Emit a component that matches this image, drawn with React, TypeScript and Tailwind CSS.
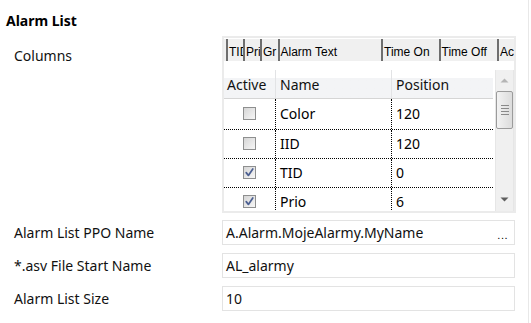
import React from 'react';

type Row = { name: string; position: string; active: boolean; h: string };

const stripCols = [
  { label: 'TID', w: 'w-[17px]' },
  { label: 'Pri', w: 'w-[17px]' },
  { label: 'Gr', w: 'w-[17.5px]' },
  { label: 'Alarm Text', w: 'w-[103.5px]' },
  { label: 'Time On', w: 'w-[57.5px]' },
  { label: 'Time Off', w: 'w-[58.5px]' },
  { label: 'Ac', w: 'w-[17px]' },
];

const rows: Row[] = [
  { name: 'Color', position: '120', active: false, h: 'h-[31px]' },
  { name: 'IID', position: '120', active: false, h: 'h-[29px]' },
  { name: 'TID', position: '0', active: true, h: 'h-[29px]' },
  { name: 'Prio', position: '6', active: true, h: 'h-[29px]' },
];

const CheckBox: React.FC<{ checked: boolean }> = ({ checked }) => (
  <div className="w-[13px] h-[13px] border border-[#8e8f8f] bg-linear-to-br from-[#d6d6d6] to-[#f7f7f7] flex items-center justify-center -mt-[1px]">
    {checked && (
      <svg width="11" height="11" viewBox="0 0 11 11">
        <path d="M2.2 5.6 L4.4 8.4 L8.8 2" stroke="#4b5f91" strokeWidth="1.7" fill="none" strokeLinecap="round" strokeLinejoin="round" />
      </svg>
    )}
  </div>
);

const Field: React.FC<{ label: string; value: string; dots?: boolean; mt: string }> = ({ label, value, dots, mt }) => (
  <div className={`flex items-center ${mt}`}>
    <div className="w-[222px] pl-[14px] text-[#111]">{label}</div>
    <div className="w-[293px] h-[25px] border border-[#e3e3e3] flex items-center justify-between pl-[3px] pr-[6px]">
      <span className="text-[#111]">{value}</span>
      {dots && <span className="text-[11px] font-['Liberation_Sans'] pt-[5px] tracking-[0.5px]">...</span>}
    </div>
  </div>
);

const App: React.FC = () => {
  return (
    <div className="w-[531px] h-[323px] bg-white overflow-hidden font-['Noto_Sans',sans-serif] text-[14px] leading-[20px] text-black">
      <div className="w-[529px] h-full border-r border-[#e8e8e8]">
        {/* Title */}
        <div className="pt-[11px] pl-[6px] h-[36px] font-bold">Alarm List</div>

        {/* Columns editor */}
        <div className="flex">
          <div className="w-[222px] pl-[14px] pt-[10px] text-[#111]">Columns</div>
          <div className="w-[294px] h-[177px] border-2 border-[#ebebeb] flex flex-col">
            {/* column preview strip */}
            <div className="mt-[1px] h-[22px] bg-[#f0f0f0] flex pl-[2px] font-['Liberation_Sans',sans-serif] text-[12px] leading-[14px] text-black">
              {stripCols.map(c => (
                <div key={c.label} className={`${c.w} h-full border-l-2 border-[#6e6e6e] pl-[1px] pt-[6px] overflow-hidden whitespace-nowrap`}>
                  {c.label}
                </div>
              ))}
            </div>

            {/* grid */}
            <div className="mt-[9px] flex flex-1 min-h-0">
              <div className="w-[269px] overflow-hidden">
                <div className="h-[29px] flex border-b border-[#d5d5d5] bg-linear-to-b from-white from-30% to-[#f3f4f6] to-30% text-[#111]">
                  <div className="w-[51px] pl-[3px] pt-[5px]">Active</div>
                  <div className="w-[116px] pl-[4px] pt-[5px] border-l border-[#e2e3e5]">Name</div>
                  <div className="flex-1 pl-[4px] pt-[5px] border-l border-[#e2e3e5]">Position</div>
                </div>
                {rows.map(r => (
                  <div key={r.name} className={`${r.h} flex border-b border-dotted border-black`}>
                    <div className="w-[51px] flex items-center justify-center">
                      <CheckBox checked={r.active} />
                    </div>
                    <div className="w-[116px] pl-[4px] flex items-center border-l border-dotted border-black">{r.name}</div>
                    <div className="flex-1 pl-[4px] flex items-center border-l border-dotted border-black">{r.position}</div>
                  </div>
                ))}
              </div>

              {/* scrollbar */}
              <div className="ml-[2px] w-[19px] bg-[#f0f0f0] border-x border-[#e6e6e6] flex flex-col items-center">
                <svg width="9" height="5" className="mt-[8px]" viewBox="0 0 9 5">
                  <path d="M0.5 4.5 L4.5 0.5 L8.5 4.5 Z" fill="#b5b5b5" />
                </svg>
                <div className="mt-[8px] w-[17px] h-[38px] rounded-[2px] border border-[#9b9b9b] bg-linear-to-r from-[#f3f3f3] to-[#dcdcdc] flex flex-col items-center justify-center gap-[2px]">
                  <div className="w-[8px] h-px bg-[#8a8a8a]" />
                  <div className="w-[8px] h-px bg-[#8a8a8a]" />
                  <div className="w-[8px] h-px bg-[#8a8a8a]" />
                  <div className="w-[8px] h-px bg-[#8a8a8a]" />
                </div>
                <div className="flex-1" />
                <svg width="9" height="5" className="mb-[9px]" viewBox="0 0 9 5">
                  <path d="M0.5 0.5 L8.5 0.5 L4.5 4.5 Z" fill="#5f5f5f" />
                </svg>
              </div>
            </div>
          </div>
        </div>

        <Field mt="mt-[7px]" label="Alarm List PPO Name" value="A.Alarm.MojeAlarmy.MyName" dots />
        <Field mt="mt-[8px]" label="*.asv File Start Name" value="AL_alarmy" />
        <Field mt="mt-[8px]" label="Alarm List Size" value="10" />
      </div>
    </div>
  );
};

export default App;
